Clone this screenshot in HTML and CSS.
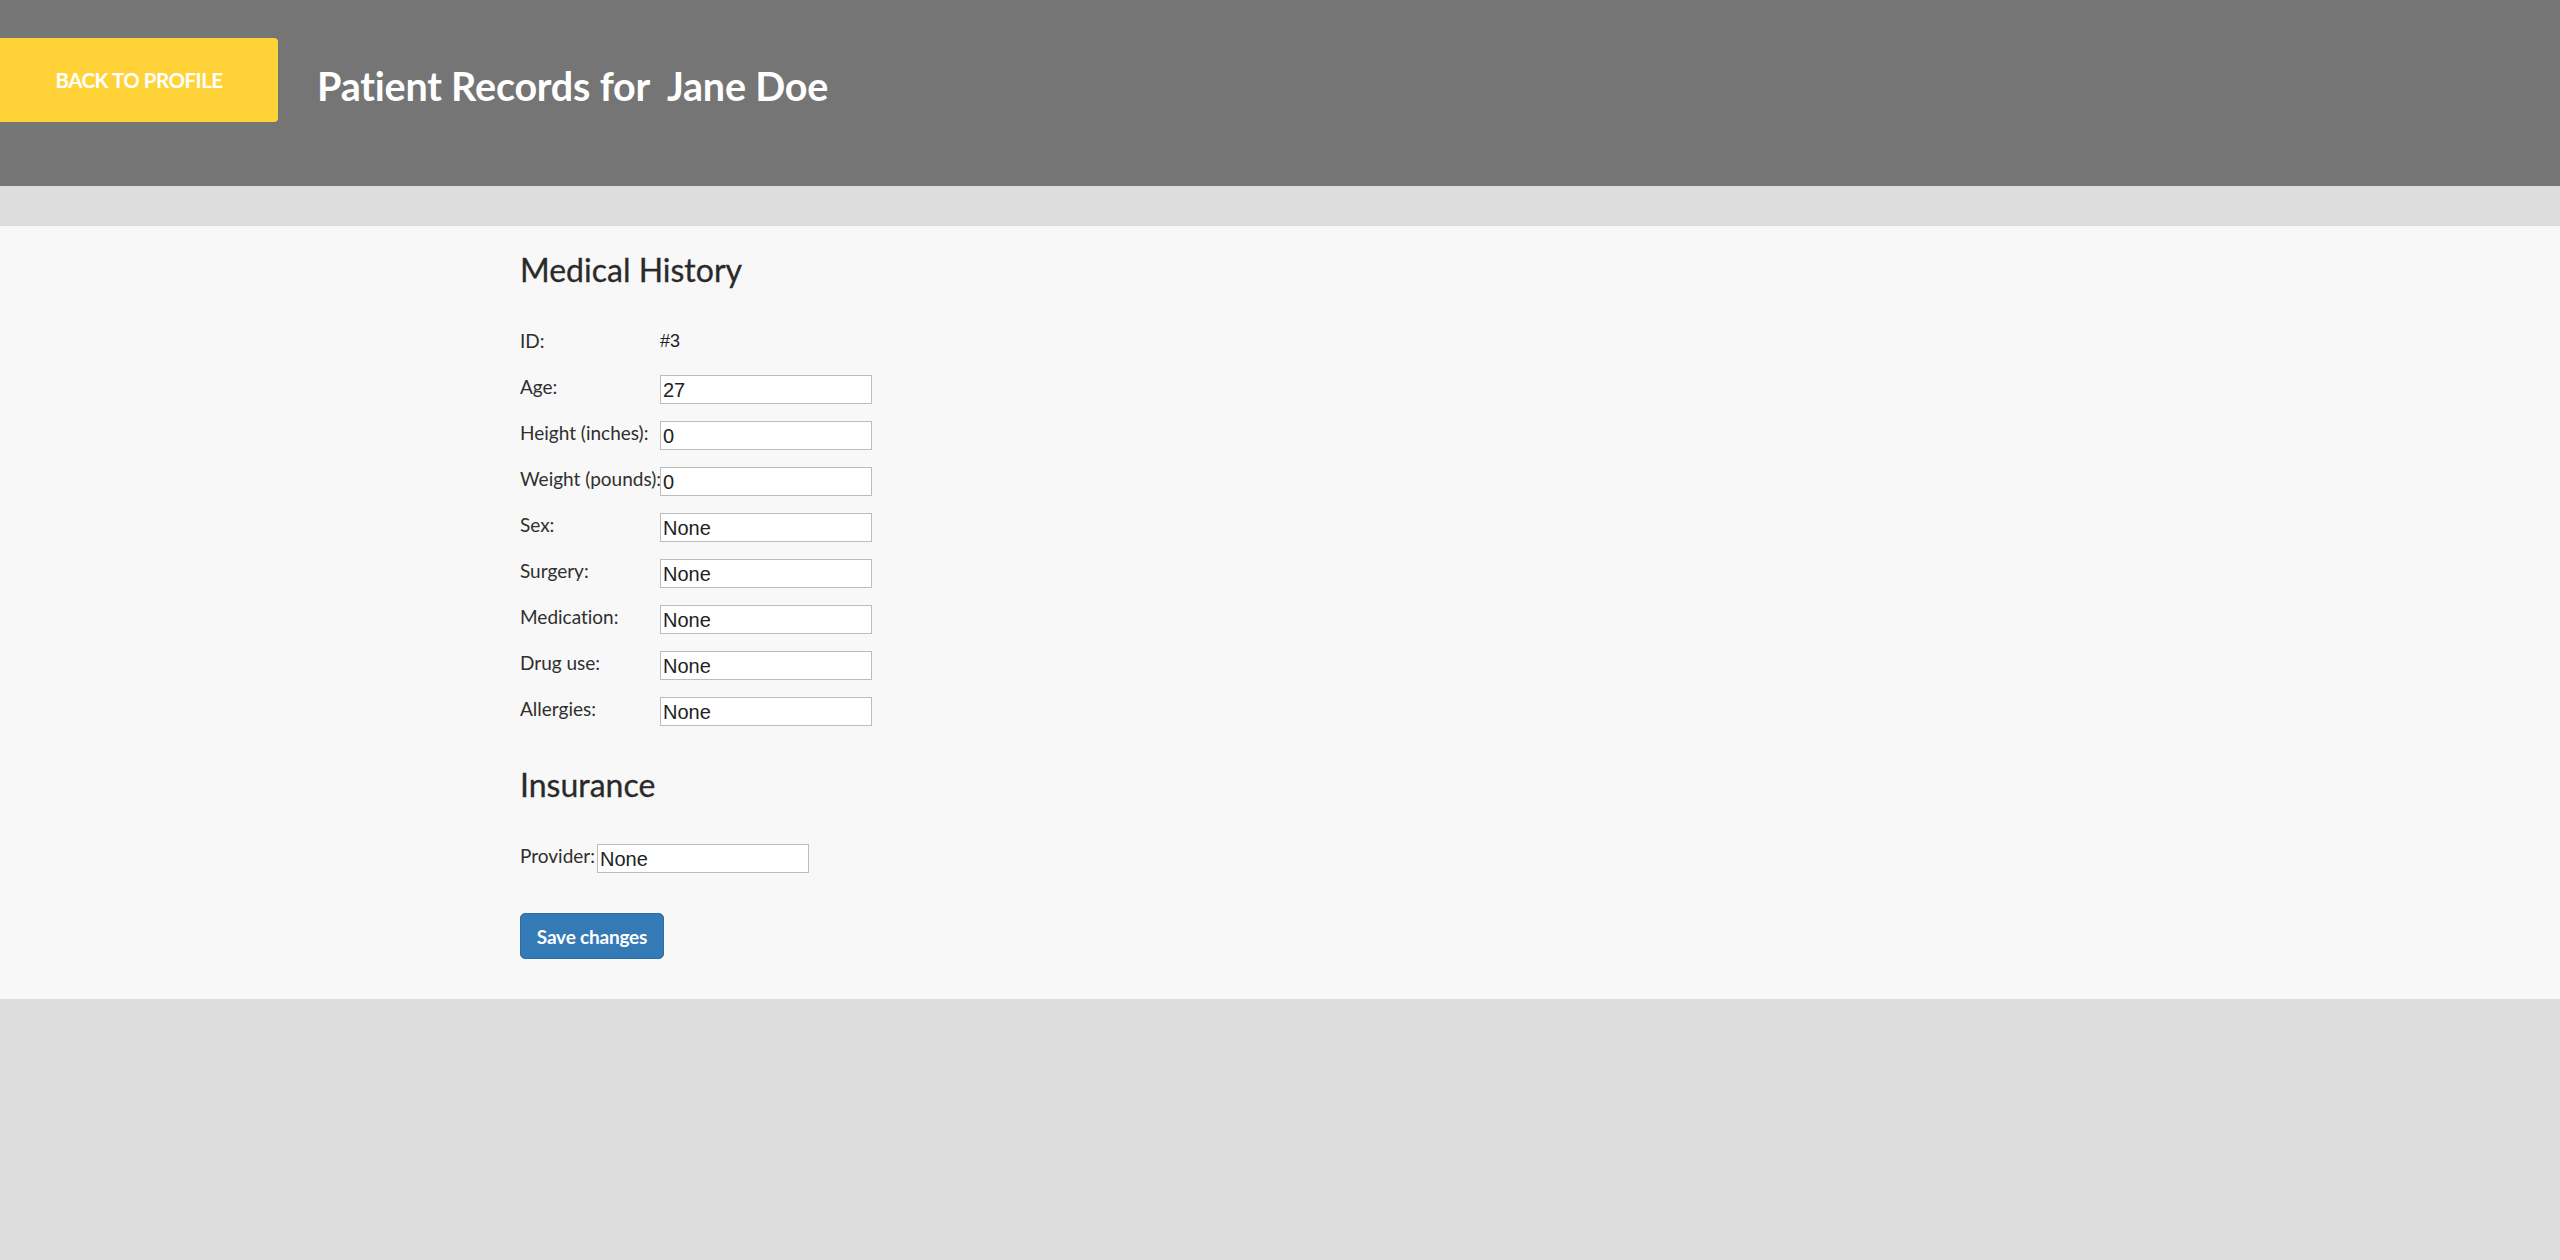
FILE: index.html
```html
<!DOCTYPE html>
<html lang="en">
<head>
<meta charset="utf-8">
<title>Patient Records</title>
<link rel="stylesheet" href="styles.css">
</head>
<body>
<header class="topbar">
  <a class="back-btn" href="#">BACK TO PROFILE</a>
  <h1 class="page-title">Patient Records for&nbsp; Jane Doe</h1>
</header>
<div class="spacer"></div>
<main class="panel">
  <div class="container">
    <h3 class="section-title">Medical History</h3>
    <div class="fields">
      <div class="row"><label class="lbl">ID:</label><span class="value">#3</span></div>
      <div class="row"><label class="lbl">Age:</label><input class="field" type="text" value="27"></div>
      <div class="row"><label class="lbl">Height (inches):</label><input class="field" type="text" value="0"></div>
      <div class="row"><label class="lbl">Weight (pounds):</label><input class="field" type="text" value="0"></div>
      <div class="row"><label class="lbl">Sex:</label><input class="field" type="text" value="None"></div>
      <div class="row"><label class="lbl">Surgery:</label><input class="field" type="text" value="None"></div>
      <div class="row"><label class="lbl">Medication:</label><input class="field" type="text" value="None"></div>
      <div class="row"><label class="lbl">Drug use:</label><input class="field" type="text" value="None"></div>
      <div class="row"><label class="lbl">Allergies:</label><input class="field" type="text" value="None"></div>
    </div>
    <h3 class="section-title">Insurance</h3>
    <div class="fields">
      <div class="row"><label class="lbl-inline">Provider:</label><input class="field" type="text" value="None"></div>
    </div>
    <button class="save-btn" type="button">Save changes</button>
  </div>
</main>
</body>
</html>
```
FILE: styles.css
```css
html, body {
  margin: 0;
  padding: 0;
}
body {
  background: #dddddd;
  font-family: "Lato", "Liberation Sans", sans-serif;
  font-variant-ligatures: none;
  color: #2f2f2f;
  font-size: 19px;
  line-height: 27px;
}
.topbar {
  background: #757575;
  height: 186px;
  display: flex;
  align-items: flex-start;
}
.back-btn {
  margin-top: 38px;
  width: 278px;
  height: 84px;
  line-height: 84px;
  background: #ffd338;
  border-radius: 0 4px 4px 0;
  color: #ffffff;
  font-weight: 700;
  font-size: 20.5px;
  text-align: center;
  text-decoration: none;
  letter-spacing: -0.5px;
}
.page-title {
  margin: 64px 0 0 39px;
  font-size: 39.5px;
  line-height: 44px;
  font-weight: 700;
  color: #ffffff;
  letter-spacing: -0.2px;
}
.spacer {
  height: 40px;
}
.panel {
  background: #f8f8f8;
  padding-bottom: 40px;
}
.container {
  width: 1520px;
  margin: 0 auto;
  display: flex;
  flex-direction: column;
  align-items: flex-start;
}
.section-title {
  margin: 26px 0 13px;
  font-size: 32px;
  line-height: 35px;
  font-weight: 400;
  color: #2a2a2a;
  -webkit-text-stroke: 0.3px #2a2a2a;
}
.fields {
  padding-top: 27px;
  display: flex;
  flex-direction: column;
}
.row {
  height: 46px;
  display: flex;
  align-items: flex-start;
}
.lbl {
  width: 140px;
  flex: none;
  white-space: nowrap;
}
.lbl-inline {
  margin-right: 2px;
}
.value {
  font-family: "Liberation Sans", Arial, sans-serif;
  font-size: 18px;
  line-height: 29px;
  color: #222222;
}
.field {
  margin-top: 2px;
  box-sizing: border-box;
  width: 212px;
  height: 29px;
  border: 1px solid #bdbdbd;
  background: #ffffff;
  padding: 2px 2px 0;
  font-family: "Liberation Sans", Arial, sans-serif;
  font-size: 20px;
  color: #222222;
  outline: none;
}
.save-btn {
  margin-top: 25px;
  height: 46px;
  width: 144px;
  padding: 0;
  background: #337ab7;
  border: 1px solid #2e6da4;
  border-radius: 5px;
  color: #ffffff;
  font-family: "Lato", "Liberation Sans", sans-serif;
  font-weight: 700;
  font-size: 19px;
  letter-spacing: -0.2px;
}
```
